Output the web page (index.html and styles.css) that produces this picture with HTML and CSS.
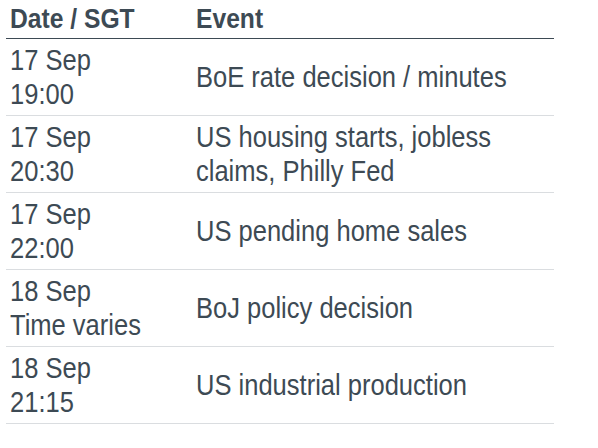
FILE: index.html
```html
<!DOCTYPE html>
<html lang="en">
<head>
    <meta charset="UTF-8">
    <title>Calendar</title>
    <link rel="stylesheet" href="styles.css">
</head>
<body>
    <table class="calendar">
        <thead>
            <tr>
                <th class="date"><span class="txt">Date / SGT</span></th>
                <th><span class="txt">Event</span></th>
            </tr>
        </thead>
        <tbody>
            <tr>
                <td class="date"><span class="txt">17 Sep<br>19:00</span></td>
                <td><span class="txt">BoE rate decision / minutes</span></td>
            </tr>
            <tr>
                <td class="date"><span class="txt">17 Sep<br>20:30</span></td>
                <td><span class="txt">US housing starts, jobless<br>claims, Philly Fed</span></td>
            </tr>
            <tr>
                <td class="date"><span class="txt">17 Sep<br>22:00</span></td>
                <td><span class="txt">US pending home sales</span></td>
            </tr>
            <tr>
                <td class="date"><span class="txt">18 Sep<br>Time varies</span></td>
                <td><span class="txt">BoJ policy decision</span></td>
            </tr>
            <tr>
                <td class="date"><span class="txt">18 Sep<br>21:15</span></td>
                <td><span class="txt">US industrial production</span></td>
            </tr>
        </tbody>
    </table>
</body>
</html>
```

FILE: styles.css
```css
:root {
    --ink: #3d4a54;
    --rule: #dadde0;
}

* {
    margin: 0;
    padding: 0;
}

body {
    background: #fff;
    font-family: "Liberation Sans", Arial, sans-serif;
    color: var(--ink);
}

.calendar {
    width: 548px;
    margin-left: 6px;
    border-collapse: collapse;
    table-layout: fixed;
}

.calendar th {
    text-align: left;
    font-size: 28px;
    font-weight: bold;
    line-height: 30px;
    padding: 4px 0 4px 4px;
    border-bottom: 1px solid var(--ink);
}

.calendar td {
    font-size: 29px;
    line-height: 34px;
    padding: 4px 0 4px 4px;
    vertical-align: middle;
    border-bottom: 1px solid var(--rule);
}

.calendar .date {
    width: 182px;
}

/* the source face is a narrow cut, squeeze the regular one to match */
.txt {
    display: inline-block;
    white-space: nowrap;
    transform: scaleX(0.88);
    transform-origin: 0 50%;
}
```
